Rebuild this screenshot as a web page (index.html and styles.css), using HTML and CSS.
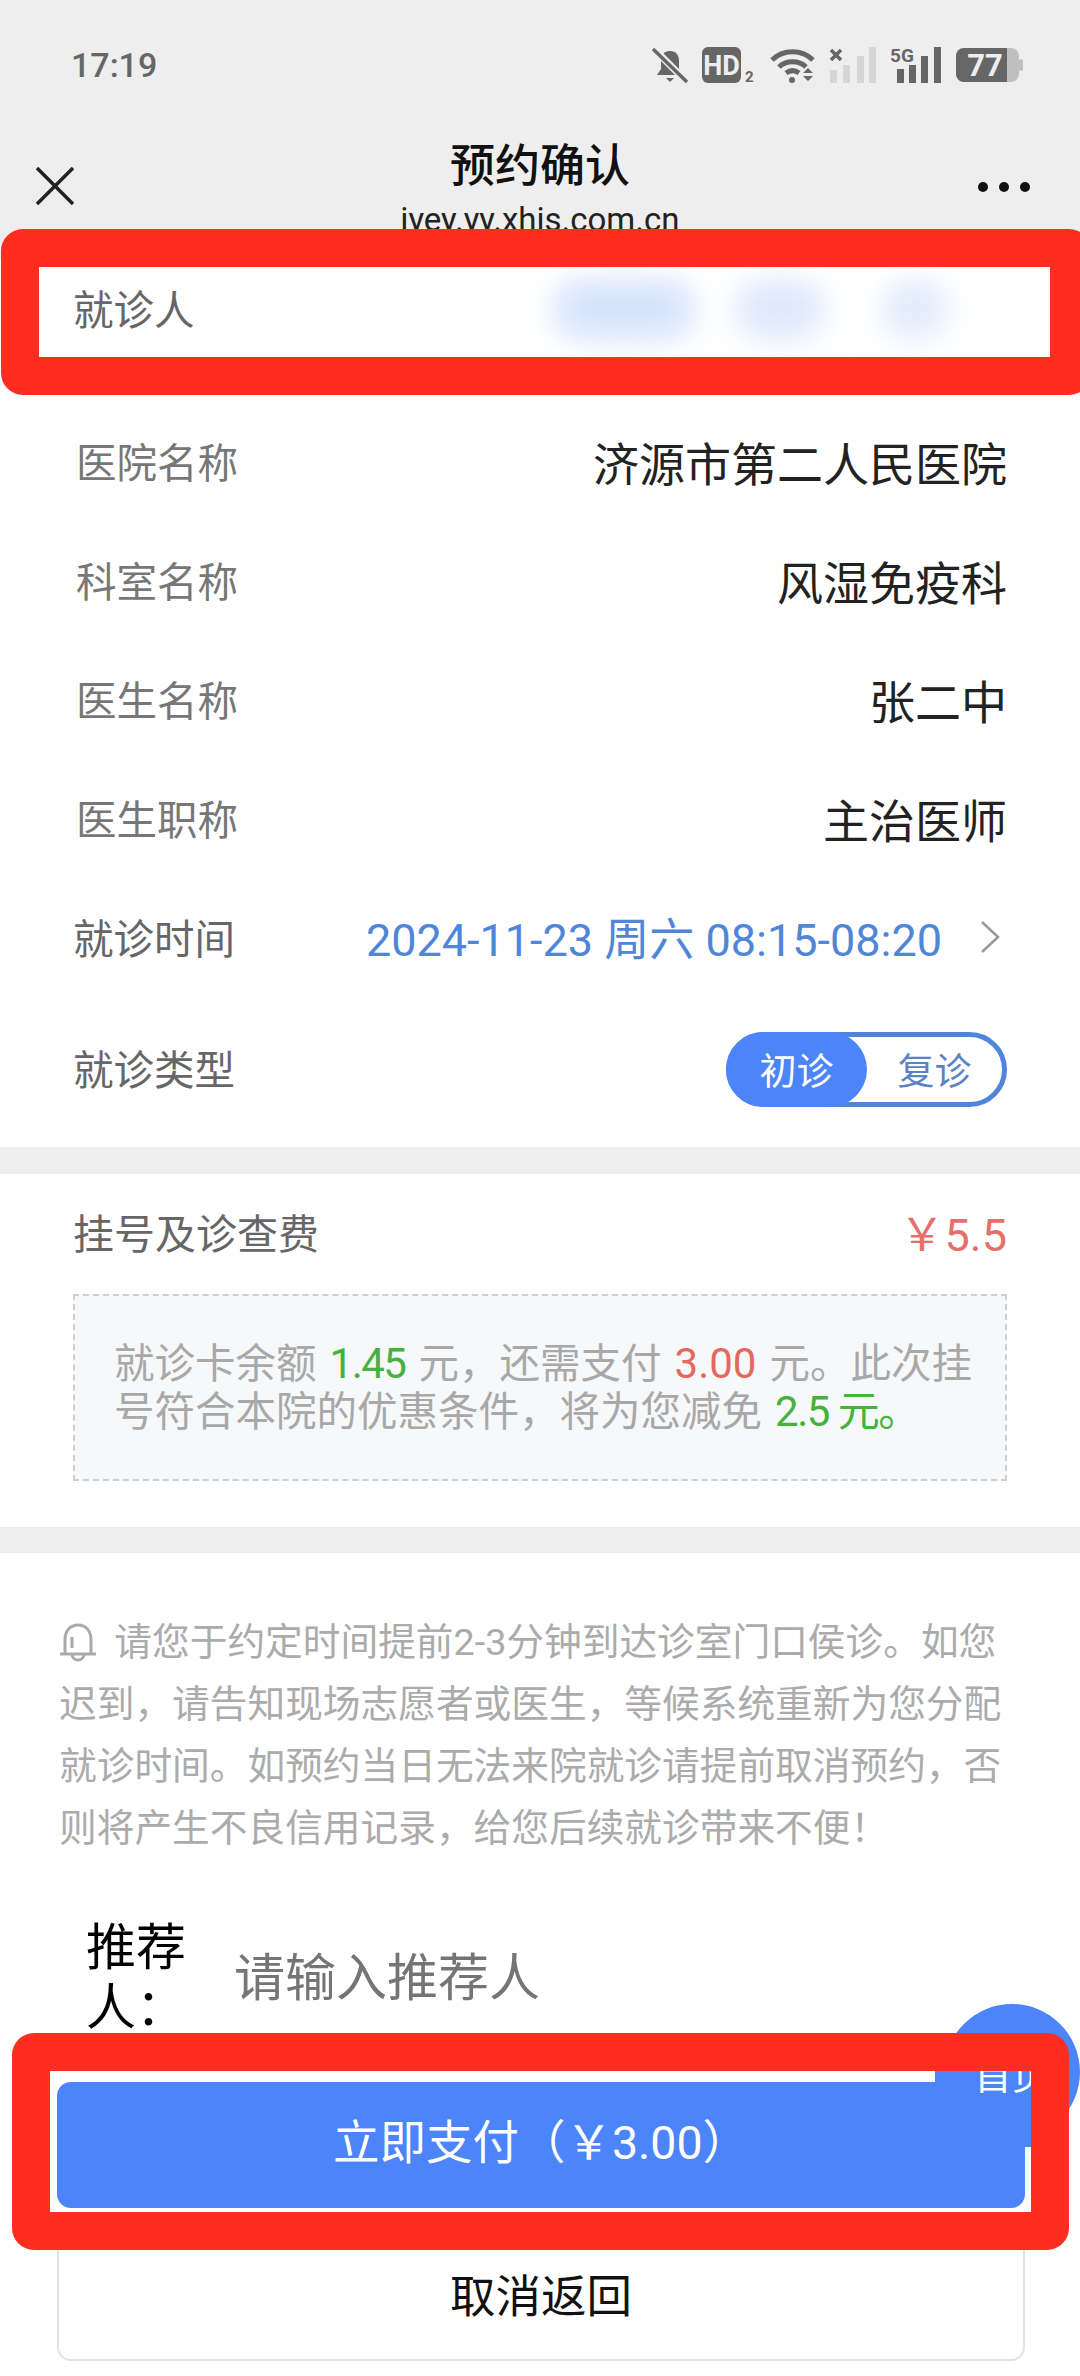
FILE: index.html
```html
<!DOCTYPE html>
<html lang="zh-CN">
<head>
    <meta charset="UTF-8">
    <meta name="viewport" content="width=device-width, initial-scale=1.0">
    <title>预约确认</title>
    <link rel="stylesheet" href="styles.css">
</head>
<body>
    <div class="top">
        <div class="status-bar">
            <span class="clock">17:19</span>
            <div class="status-icons">
                <svg class="icon-bell-off" width="36" height="36" viewBox="0 0 36 36">
                    <path d="M18 4c-6 0-9 4-9 10v8l-4 6h26l-4-6v-8c0-6-3-10-9-10z" fill="#666"/>
                    <path d="M14 31h8l-4 4z" fill="#666"/>
                    <path d="M1 1l34 34" stroke="#eee" stroke-width="7"/>
                    <path d="M1 2l34 33" stroke="#666" stroke-width="3.5"/>
                </svg>
                <svg class="icon-hd" width="54" height="36" viewBox="0 0 54 36">
                    <rect width="39" height="36" rx="6" fill="#666"/>
                    <text x="19.5" y="28" text-anchor="middle" class="hd-text">HD</text>
                    <text x="43" y="35" class="hd-sub">2</text>
                </svg>
                <svg class="icon-wifi" width="45" height="36" viewBox="0 0 45 36" fill="none" stroke="#666" stroke-width="5">
                    <path d="M2 13c11-11 30-11 41 0"/>
                    <path d="M9 20c7-7 20-7 27 0"/>
                    <path d="M16 26c4-3 9-3 13 0"/>
                    <circle cx="22" cy="33" r="3" fill="#666" stroke="none"/>
                    <path d="M38 21l5 5h-10zM33 29h10l-5 5z" fill="#666" stroke="none"/>
                </svg>
                <svg class="icon-signal" width="47" height="36" viewBox="0 0 47 36">
                    <path d="M2 3l10 10M12 3l-10 10" stroke="#666" stroke-width="3.5"/>
                    <rect x="1" y="23" width="7" height="13" fill="#d6d6d6"/>
                    <rect x="14" y="18" width="7" height="18" fill="#d6d6d6"/>
                    <rect x="28" y="9" width="7" height="27" fill="#d6d6d6"/>
                    <rect x="40" y="0" width="7" height="36" fill="#d6d6d6"/>
                </svg>
                <svg class="icon-signal" width="52" height="36" viewBox="0 0 52 36">
                    <text x="0" y="15" class="net-text">5G</text>
                    <rect x="7" y="22" width="7" height="14" fill="#666"/>
                    <rect x="19" y="18" width="7" height="18" fill="#666"/>
                    <rect x="31" y="9" width="7" height="27" fill="#666"/>
                    <rect x="44" y="0" width="7" height="36" fill="#666"/>
                </svg>
                <svg class="icon-battery" width="67" height="36" viewBox="0 0 67 36">
                    <rect x="0" y="1" width="63" height="34" rx="8" fill="#bfbfbf"/>
                    <path d="M8 1h43v34H8a8 8 0 0 1-8-8V9a8 8 0 0 1 8-8z" fill="#666"/>
                    <rect x="63" y="12" width="4" height="12" rx="2" fill="#bfbfbf"/>
                    <text x="29" y="29" text-anchor="middle" class="battery-text">77</text>
                </svg>
            </div>
        </div>
        <div class="nav">
            <svg class="nav-close" width="38" height="38" viewBox="0 0 38 38">
                <path d="M1 1l36 36M37 1l-36 36" stroke="#222" stroke-width="3.5"/>
            </svg>
            <div class="nav-title">
                <div class="title">预约确认</div>
                <div class="url">jyey.yy.xhis.com.cn</div>
            </div>
            <div class="nav-more"><i></i><i></i><i></i></div>
        </div>
    </div>

    <div class="patient-row">
        <span class="label">就诊人</span>
        <div class="patient-name"><i class="blob-a"></i><i class="blob-b"></i><i class="blob-c"></i></div>
    </div>

    <div class="details">
        <div class="row info"><span class="label">医院名称</span><span class="value">济源市第二人民医院</span></div>
        <div class="row info"><span class="label">科室名称</span><span class="value">风湿免疫科</span></div>
        <div class="row info"><span class="label">医生名称</span><span class="value">张二中</span></div>
        <div class="row info"><span class="label">医生职称</span><span class="value">主治医师</span></div>
        <div class="row">
            <span class="label">就诊时间</span>
            <div class="time">
                <span>2024-11-23 周六 08:15-08:20</span>
                <svg width="20" height="32" viewBox="0 0 20 32"><path d="M2 1l16 15L2 31" fill="none" stroke="#999" stroke-width="2.5"/></svg>
            </div>
        </div>
        <div class="row type-row">
            <span class="label">就诊类型</span>
            <div class="toggle"><span class="toggle-on">初诊</span><span class="toggle-off">复诊</span></div>
        </div>
    </div>

    <div class="fee">
        <div class="fee-row"><span class="label">挂号及诊查费</span><span class="price">￥5.5</span></div>
        <div class="fee-box">就诊卡余额 <span class="green">1.45</span> 元，还需支付 <span class="red">3.00</span> 元。此次挂号符合本院的优惠条件，将为您减免 <span class="green">2.5 元。</span></div>
    </div>

    <div class="notice">
        <svg class="notice-bell" width="38" height="40" viewBox="0 0 38 40" fill="none" stroke="#aaa" stroke-width="3">
            <path d="M1 32h36M6 32V18C6 9 11 3 19 3s13 6 13 15v14"/>
            <path d="M13 32c0 4 3 6 6 6s6-2 6-6M13 15v11"/>
        </svg>
        请您于约定时间提前2-3分钟到达诊室门口侯诊。如您迟到，请告知现场志愿者或医生，等候系统重新为您分配就诊时间。如预约当日无法来院就诊请提前取消预约，否则将产生不良信用记录，给您后续就诊带来不便！
    </div>

    <div class="referrer">
        <span class="referrer-label">推荐人：</span>
        <span class="referrer-input">请输入推荐人</span>
    </div>

    <div class="actions">
        <button class="btn-pay">立即支付（￥3.00）</button>
        <button class="btn-cancel">取消返回</button>
    </div>

    <!-- floating home button, sits over the pay button -->
    <div class="home-patch"></div>
    <div class="home-btn">首页</div>

    <!-- red marks drawn on the screenshot -->
    <div class="mark mark-patient"></div>
    <div class="mark mark-pay"></div>
</body>
</html>
```

FILE: styles.css
```css
:root {
    --grey-bg: #eeeeee;
    --blue: #4c84fb;
    --red-mark: #fd2d20;
}

* {
    box-sizing: border-box;
}

html, body {
    margin: 0;
    padding: 0;
}

body {
    position: relative;
    width: 1080px;
    height: 2376px;
    overflow: hidden;
    background: white;
    color: #222;
    font-family: Roboto, "Noto Sans CJK SC", sans-serif;
}

.top {
    height: 260px;
    background: var(--grey-bg);
}

.status-bar {
    display: flex;
    align-items: center;
    justify-content: space-between;
    height: 130px;
    padding: 0 57px 0 71px;
}

.clock {
    font-size: 34px;
    font-weight: 500;
    color: #666;
}

.status-icons {
    display: flex;
    align-items: flex-start;
    gap: 14px;
}

.status-icons svg {
    overflow: visible;
}

.hd-text {
    font: 700 27px "Roboto", sans-serif;
    fill: #eee;
}

.hd-sub {
    font: 700 15px "Roboto", sans-serif;
    fill: #666;
}

.net-text {
    font: 700 19px "Roboto", sans-serif;
    fill: #666;
}

.battery-text {
    font: 700 31px "Roboto", sans-serif;
    fill: #eee;
}

.nav {
    position: relative;
    display: flex;
    justify-content: space-between;
    align-items: center;
    height: 130px;
    padding: 0 50px 0 36px;
}

.nav-close {
    margin-bottom: 19px;
}

.nav-title {
    position: absolute;
    left: 0;
    right: 0;
    top: 8px;
    text-align: center;
}

.title {
    font-size: 45px;
    line-height: 58px;
    font-weight: 500;
    color: #111;
}

.url {
    margin-top: 5px;
    font-size: 33px;
    line-height: 38px;
    color: #222;
}

.nav-more {
    display: flex;
    gap: 11px;
    margin-bottom: 16px;
}

.nav-more i {
    width: 10px;
    height: 10px;
    border-radius: 50%;
    background: #111;
}

.label {
    font-size: 40.5px;
    color: #666;
}

.patient-row {
    display: flex;
    align-items: center;
    height: 94px;
    padding-left: 73px;
}

.patient-name {
    display: flex;
    align-items: center;
    margin-left: 361px;
}

.patient-name i {
    display: block;
    height: 52px;
    background: #d3e2fb;
    border-radius: 22px;
    box-shadow: 0 10px 26px #e9f0fd;
    filter: blur(15px);
}

.blob-a {
    width: 136px;
}

.blob-b {
    width: 84px;
    margin-left: 46px;
    opacity: 0.8;
}

.blob-c {
    width: 62px;
    margin-left: 62px;
    opacity: 0.7;
}

.details {
    padding: 47px 73px 8px;
}

.row {
    display: flex;
    justify-content: space-between;
    align-items: center;
    height: 119px;
}

.info {
    padding-left: 3px;
}

.info .label {
    color: #777;
}

.value {
    font-size: 46px;
    color: #222;
}

.time {
    display: flex;
    align-items: center;
    gap: 38px;
    margin-right: 7px;
    font-size: 45px;
    color: #4f86d8;
}

.type-row {
    height: 143px;
}

.toggle {
    display: flex;
    width: 281px;
    height: 75px;
    margin-top: 3px;
    border: 5px solid #5085dc;
    border-radius: 38px;
    font-size: 37px;
}

.toggle span {
    display: flex;
    align-items: center;
    justify-content: center;
}

.toggle-on {
    width: 141px;
    margin: -5px 0 -5px -5px;
    background: var(--blue);
    border-radius: 38px;
    color: white;
}

.toggle-off {
    flex: 1;
    color: #5a83c4;
}

.fee {
    height: 406px;
    padding: 0 73px;
    border-top: 27px solid var(--grey-bg);
    border-bottom: 26px solid var(--grey-bg);
}

.fee-row {
    display: flex;
    justify-content: space-between;
    align-items: center;
    height: 118px;
    padding-bottom: 4px;
}

.fee-row .label {
    font-size: 41px;
}

.price {
    font-size: 45px;
    color: #e5706a;
}

.fee-box {
    height: 187px;
    margin-top: 2px;
    padding: 44px 20px 0 39px;
    border: 2px dashed #cfcfcf;
    background: #f7f8fa;
    font-size: 40.5px;
    line-height: 47px;
    color: #a8a8a8;
}

.green,
.red {
    padding: 0 3px;
    font-size: 42px;
}

.green {
    letter-spacing: -1.5px;
    color: #45b23f;
}

.red {
    color: #e4685c;
}

.notice {
    padding: 58px 72px 0 59px;
    font-size: 37.7px;
    line-height: 62px;
    color: #ababab;
}

.notice-bell {
    margin-right: 8px;
    vertical-align: -7px;
}

.referrer {
    display: flex;
    align-items: center;
    margin-top: 59px;
    padding-left: 86px;
    font-size: 50px;
}

.referrer-label {
    width: 104px;
    line-height: 60px;
    color: #000;
}

.referrer-input {
    margin-left: 44px;
    margin-bottom: 8px;
    font-size: 51px;
    color: #757575;
}

.actions {
    display: flex;
    flex-direction: column;
    gap: 27px;
    margin: 44px 55px 0 57px;
}

.actions button {
    font-family: inherit;
    border-radius: 14px;
}

.btn-pay {
    height: 126px;
    padding-bottom: 15px;
    border: none;
    background: var(--blue);
    font-size: 46.5px;
    color: white;
}

.btn-cancel {
    height: 126px;
    padding-bottom: 12px;
    border: 2px solid #e3e3e3;
    background: white;
    font-size: 45.5px;
    color: #111;
}

.home-patch {
    position: absolute;
    left: 935px;
    top: 2060px;
    width: 96px;
    height: 87px;
    background: var(--blue);
}

.home-btn {
    position: absolute;
    left: 944px;
    top: 2004px;
    display: flex;
    align-items: center;
    justify-content: center;
    width: 136px;
    height: 136px;
    border-radius: 50%;
    background: var(--blue);
    font-size: 38px;
    color: white;
}

.mark {
    position: absolute;
    border: 38px solid var(--red-mark);
    border-radius: 22px;
}

.mark-patient {
    left: 1px;
    top: 229px;
    width: 1090px;
    height: 166px;
    border-right-width: 41px;
}

.mark-pay {
    left: 12px;
    top: 2033px;
    width: 1057px;
    height: 217px;
}
```
